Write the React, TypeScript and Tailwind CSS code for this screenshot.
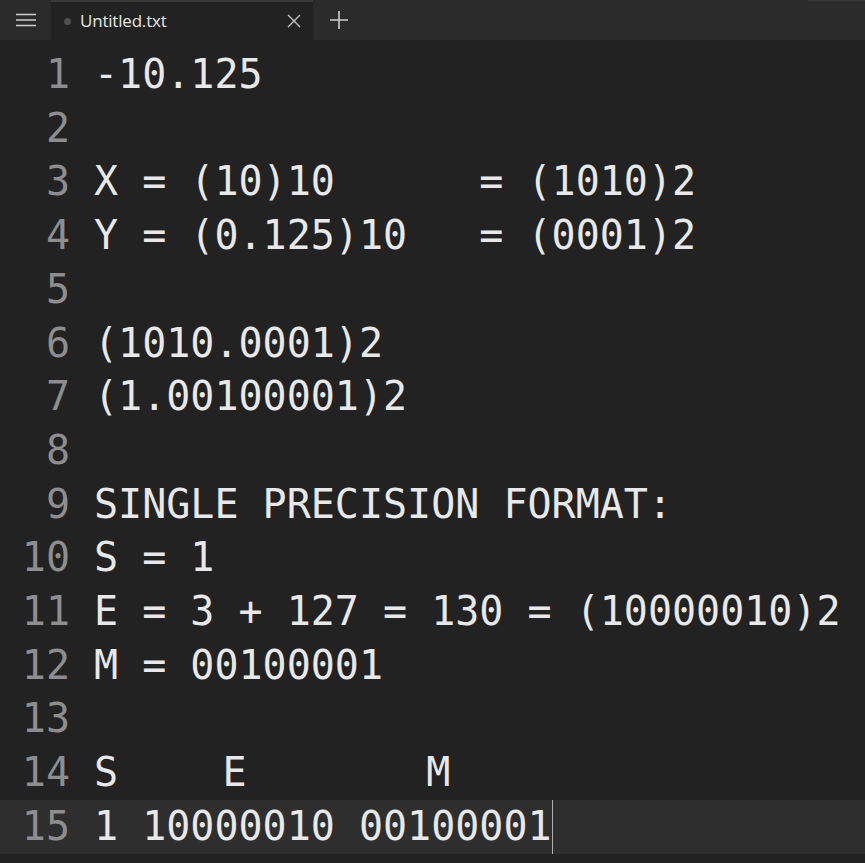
import type { ReactNode } from 'react';

const lines: ReactNode[] = [
  '-10.125',
  '',
  'X = (10)10      = (1010)2',
  'Y = (0.125)10   = (0001)2',
  '',
  '(1010.0001)2',
  '(1.00100001)2',
  '',
  'SINGLE PRECISION FORMAT:',
  'S = 1',
  'E = 3 + 127 = 130 = (10000010)2',
  'M = 00100001',
  '',
  <>
    {'S    '}
    <span className="ml-[8px]">E</span>
    {'        '}
    <span className="-ml-[13px]">M</span>
  </>,
  '1 10000010 00100001',
];

function TabBar() {
  return (
    <div className="flex h-10 bg-[#2b2b2b]">
      <div className="flex w-[51px] items-center justify-center">
        <svg width="20" height="14" viewBox="0 0 20 14" className="text-[#cfcfcf]">
          <path d="M0 1.5h20M0 7h20M0 12.5h20" stroke="currentColor" strokeWidth="1.3" />
        </svg>
      </div>
      <div className="flex w-[262px] items-center border-t-2 border-[#3a3a3a] bg-[#222222]">
        <span className="ml-[13px] h-[7px] w-[7px] rounded-full bg-[#4f4f4f]" />
        <span className="ml-[9px] font-['Open_Sans',sans-serif] text-[17px] tracking-[-0.2px] text-[#e6e6e6]">
          Untitled.txt
        </span>
        <svg width="16" height="16" viewBox="0 0 16 16" className="ml-auto mr-[11px] text-[#c4c4c4]">
          <path d="M2 2l12 12M14 2L2 14" stroke="currentColor" strokeWidth="1.4" />
        </svg>
      </div>
      <div className="flex w-[52px] items-center justify-center">
        <svg width="20" height="20" viewBox="0 0 20 20" className="text-[#cfcfcf]">
          <path d="M10 1v18M1 10h18" stroke="currentColor" strokeWidth="1.6" />
        </svg>
      </div>
      <div className="flex-1" />
      <div className="w-[57px] border-t border-[#3a3a3a]" />
    </div>
  );
}

export default function App() {
  return (
    <div className="h-[863px] w-[865px] overflow-hidden bg-[#222222]">
      <TabBar />
      <div className="pt-[8px] font-['DejaVu_Sans_Mono',monospace] text-[40px] leading-[53.7px]">
        {lines.map((line, i) => {
          const isCurrent = i === lines.length - 1;
          return (
            <div key={i} className={`flex ${isCurrent ? 'bg-[#2e2e2e]' : ''}`}>
              <div className="w-[70px] shrink-0 text-right text-[#8e8e8e]">{i + 1}</div>
              <div className="ml-[24px] flex whitespace-pre text-[#e8e8e8]">
                <span>{line}</span>
                {isCurrent && <span className="w-px self-stretch bg-[#b0b0b0]" />}
              </div>
            </div>
          );
        })}
      </div>
    </div>
  );
}
